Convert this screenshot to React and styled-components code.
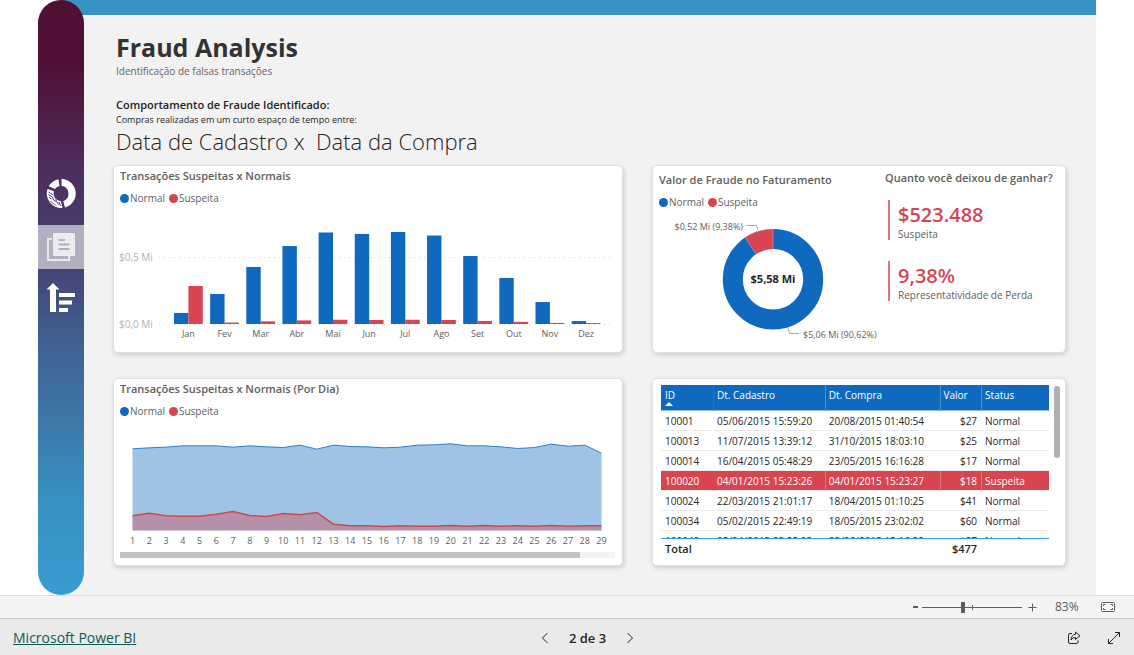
import React, { useState } from 'react';
import styled, { createGlobalStyle } from 'styled-components'

const BLUE = '#0f6abf'
const RED = '#d64550'

const GlobalStyle = createGlobalStyle`
    * { box-sizing: border-box; }
    body {
        margin: 0;
        background: #fff;
        color: #252423;
        font-family: "Open Sans", "Noto Sans", sans-serif;
        font-size: 11px;
    }
    h1, h2, p { margin: 0; }
    button, input { font: inherit; margin: 0; }
    svg { display: block; }
`

const Page = styled.div`
    min-height: 100vh;
    display: flex;
    flex-direction: column;
`

const Report = styled.div`
    flex: 1;
    display: flex;
    margin: 0 38px;
    background:
        linear-gradient(#3893c4, #3893c4) 23px 0 / 100% 15px no-repeat,
        linear-gradient(#f2f2f2, #f2f2f2) 23px 0 / 100% 100% no-repeat;
`

const Nav = styled.nav`
    width: 46px;
    flex: none;
    padding-top: 173px;
    display: flex;
    flex-direction: column;
    gap: 8px;
    border-radius: 23px;
    background: linear-gradient(#501036 0%, #501036 11%, #4c2d5b 28%, #444776 46%, #3f6596 60%, #3890c2 84%, #379ccf 100%);
`

const NavButton = styled.button`
    width: 46px;
    height: 44px;
    padding: 0;
    border: 0;
    color: ${p => p.$active ? '#ececef' : '#fff'};
    background: ${p => p.$active ? '#b2b0c0' : 'transparent'};
`

const Content = styled.main`
    flex: 1;
    min-width: 0;
    padding: 33px 30px 29px 29px;
`

const Heading = styled.header`
    height: 132px;
    padding-left: 3px;
`

const Title = styled.h1`
    font-size: 25px;
    line-height: 28px;
    font-weight: 700;
    color: #333;
`

const SubTitle = styled.p`
    font-size: 10px;
    line-height: 20px;
    color: #666;
    margin-bottom: 15px;
`

const Lead = styled.p`
    font-size: 11px;
    line-height: 18px;
    font-weight: 600;
`

const Note = styled.p`
    font-size: 9px;
    line-height: 12px;
`

const Versus = styled.p`
    font-size: 22px;
    line-height: 30px;
    font-weight: 300;
    white-space: pre;
`

const Grid = styled.div`
    display: grid;
    grid-template-columns: 510fr 414fr;
    gap: 25px 29px;
`

const Card = styled.section`
    display: ${p => p.$row ? 'flex' : 'block'};
    min-width: 0;
    min-height: 188px;
    background: #fff;
    border: 1px solid #e0e0e0;
    border-radius: 5px;
    box-shadow: 1px 2px 5px rgba(0, 0, 0, 0.16);
`

const CardTitle = styled.h2`
    padding-left: ${p => p.$flush ? 0 : 6}px;
    font-size: 11px;
    line-height: 20px;
    font-weight: 600;
    color: #605e5c;
    white-space: nowrap;
`

const LegendRow = styled.div`
    display: flex;
    gap: 4px;
    margin-top: 4px;
    padding-left: 6px;
    font-size: 10px;
    line-height: 16px;
    color: #605e5c;
`

const LegendItem = styled.span`
    display: flex;
    align-items: center;
    gap: 1px;
    &::before {
        content: "";
        width: 9px;
        height: 9px;
        border-radius: 50%;
        background: ${p => p.$color};
    }
`

const Chart = styled.svg`
    width: 100%;
    height: auto;
    font-size: 9px;
    fill: #605e5c;
`

const ScrollTrack = styled.div`
    height: 6px;
    margin: 1px 7px 0 6px;
    background: #f3f3f3;
`

const ScrollThumb = styled.div`
    width: 93%;
    height: 6px;
    background: #c4c4c4;
`

const DonutPane = styled.div`
    flex: 232;
    padding-top: 4px;
`

const KpiPane = styled.div`
    flex: 180;
    padding-top: 2px;
`

const Kpi = styled.div`
    height: 40px;
    margin: ${p => p.$first ? 12 : 21}px 0 0 3px;
    padding-left: 8px;
    border-left: 2px solid #e0737b;
`

const KpiValue = styled.div`
    padding-top: 3px;
    font-size: 20px;
    line-height: 24px;
    font-weight: 600;
    color: ${RED};
`

const KpiLabel = styled.div`
    font-size: 10px;
    line-height: 14px;
    color: #605e5c;
    white-space: nowrap;
`

const TableArea = styled.div`
    display: flex;
    gap: 5px;
    padding: 6px 5px 6px 8px;
`

const TableView = styled.div`
    flex: 1;
    height: 174px;
    overflow: hidden;
`

const Table = styled.table`
    width: 100%;
    table-layout: fixed;
    border-collapse: separate;
    border-spacing: 0;
    font-size: 10px;
    line-height: 18px;
    th, td {
        padding: 0 4px;
        text-align: left;
        white-space: nowrap;
    }
    th + th, td + td { padding-left: 3px; }
    .num { text-align: right; }
`

const HeadCell = styled.th`
    height: 26px;
    vertical-align: top;
    line-height: 20px;
    font-weight: 400;
    color: #fff;
    background: ${BLUE};
    border-bottom: 1px solid #8cbbe4;
    & + & { border-left: 1px solid #1f74c4; }
    & + & + & { border-left-color: #4a92d2; }
`

const SortMark = styled.svg`
    margin-top: -3px;
`

const Row = styled.tr`
    color: ${p => p.$alert ? '#fff' : '#252423'};
    background: ${p => p.$alert ? RED : '#fff'};
    td {
        height: 20px;
        border-bottom: 1px solid #eaeaea;
    }
    td + td { border-left: 1px solid transparent; }
    td + td + td { border-left-color: ${p => p.$alert ? '#e0737b' : 'transparent'}; }
`

const TotalCell = styled.td`
    position: sticky;
    bottom: 0;
    height: 21px;
    font-size: 11px;
    font-weight: 600;
    background: #fff;
    border-top: 1px solid #3599ee;
`

const TableScroll = styled.div`
    width: 6px;
    height: 72px;
    margin-top: 1px;
    border-radius: 3px;
    background: #b0b0b0;
`

const ZoomBar = styled.div`
    height: 23px;
    display: flex;
    align-items: center;
    justify-content: flex-end;
    padding-right: 18px;
    background: #f4f4f4;
    border-top: 1px solid #dedede;
    color: #605e5c;
`

const IconButton = styled.button`
    display: flex;
    align-items: center;
    justify-content: center;
    width: ${p => p.$w || 20}px;
    height: 20px;
    padding: 0;
    border: 0;
    background: none;
    color: inherit;
`

const ZoomRange = styled.input`
    appearance: none;
    width: 100px;
    height: 12px;
    background:
        linear-gradient(#605e5c, #605e5c) 0 6px / 100% 1px no-repeat,
        linear-gradient(#605e5c, #605e5c) 50px 4px / 1px 5px no-repeat;
    &::-webkit-slider-thumb {
        appearance: none;
        width: 4px;
        height: 11px;
        background: #605e5c;
    }
`

const ZoomValue = styled.span`
    width: 46px;
    padding-left: 13px;
    font-size: 12px;
    line-height: 18px;
    margin-right: 12px;
`

const Footer = styled.footer`
    height: 37px;
    display: grid;
    grid-template-columns: 1fr auto 1fr;
    align-items: center;
    padding: 2px 10px 0 13px;
    background: #eaeaea;
    border-top: 1px solid #c8c6c4;
`

const Brand = styled.a`
    font-size: 14px;
    line-height: 20px;
    color: #0f5a57;
`

const Pager = styled.div`
    display: flex;
    align-items: center;
    gap: 14px;
    padding-left: 38px;
    font-size: 13px;
    font-weight: 600;
`

const Actions = styled.div`
    display: flex;
    justify-content: flex-end;
    gap: 20px;
`

// values in thousands of dollars
const months = [
    ['Jan', 83, 286], ['Fev', 226, 11], ['Mar', 429, 20], ['Abr', 586, 27],
    ['Mai', 688, 32], ['Jun', 677, 30], ['Jul', 692, 32], ['Ago', 665, 30],
    ['Set', 511, 23], ['Out', 346, 16], ['Nov', 165, 8], ['Dez', 22, 7],
]

const normalByDay = [245, 248, 250, 254, 254, 254, 250, 254, 251, 249, 256, 244, 256, 252, 251, 248, 250, 256, 257, 260, 254, 254, 251, 246, 249, 259, 253, 256, 232]
const suspectByDay = [44, 52, 44, 43, 43, 49, 57, 45, 42, 51, 47, 54, 19, 14, 14, 12, 14, 13, 13, 15, 13, 15, 13, 14, 13, 15, 13, 14, 14]

const rows = [
    ['10001', '05/06/2015 15:59:20', '20/08/2015 01:40:54', '$27', 'Normal'],
    ['100013', '11/07/2015 13:39:12', '31/10/2015 18:03:10', '$25', 'Normal'],
    ['100014', '16/04/2015 05:48:29', '23/05/2015 16:16:28', '$17', 'Normal'],
    ['100020', '04/01/2015 15:23:26', '04/01/2015 15:23:27', '$18', 'Suspeita'],
    ['100024', '22/03/2015 21:01:17', '18/04/2015 01:10:25', '$41', 'Normal'],
    ['100034', '05/02/2015 22:49:19', '18/05/2015 23:02:02', '$60', 'Normal'],
    ['100040', '05/04/2015 23:25:03', '23/06/2015 15:16:38', '$37', 'Normal'],
]

const Legend = () => (
    <LegendRow>
        <LegendItem $color={BLUE}>Normal</LegendItem>
        <LegendItem $color={RED}>Suspeita</LegendItem>
    </LegendRow>
)

const BarChart = () => {
    const base = 118
    const k = 0.133
    return (
        <Chart viewBox="0 0 508 146">
            {[['$0,5 Mi', 51.5], ['$0,0 Mi', 118.5]].map(([label, y]) => (
                <g key={label}>
                    <text x="5" y={y + 3} fill="#b3b0ad" fontSize="10">{label}</text>
                    <line x1="45" x2="498" y1={y} y2={y} stroke="#d6d6d6" strokeDasharray="1 4" />
                </g>
            ))}
            {months.map(([name, normal, suspect], i) => {
                const x = 60 + i * 36.15
                return (
                    <g key={name}>
                        <rect x={x} y={base - normal * k} width="14.4" height={normal * k} fill={BLUE} />
                        <rect x={x + 14.4} y={base - suspect * k} width="14.4" height={suspect * k} fill={RED} />
                        <text x={x + 14.4} y="131" textAnchor="middle">{name}</text>
                    </g>
                )
            })}
        </Chart>
    )
}

const AreaChart = () => {
    const px = i => 18.5 + i * 16.75
    const line = data => data.map((v, i) => `${px(i)},${111.5 - v / 3}`).join(' ')
    const area = data => `${px(0)},111.5 ${line(data)} ${px(28)},111.5`
    return (
        <Chart viewBox="0 0 508 132">
            <polygon points={area(normalByDay)} fill={BLUE} fillOpacity="0.4" />
            <polygon points={area(suspectByDay)} fill={RED} fillOpacity="0.4" />
            <polyline points={line(normalByDay)} fill="none" stroke="#2f7fcb" />
            <polyline points={line(suspectByDay)} fill="none" stroke={RED} strokeWidth="1.5" />
            {normalByDay.map((v, i) => (
                <text key={i} x={px(i)} y="125" textAnchor="middle">{i + 1}</text>
            ))}
        </Chart>
    )
}

const Donut = () => (
    <Chart viewBox="0 0 232 142">
        <circle cx="120" cy="69.3" r="40.2" fill="none" stroke={BLUE} strokeWidth="20" />
        <path d="M92 27.6A50.2 50.2 0 0 1 120 19.1V39.1A30.2 30.2 0 0 0 103.2 44.2Z" fill={RED} stroke="#fff" strokeWidth="0.3" />
        <path d="M93.5 15.5H103.5L105 20M135 118l1.500 5.500H146" fill="none" stroke="#a6a6a6" />
        <text x="90" y="20" textAnchor="end">$0,52 Mi (9,38%)</text>
        <text x="150" y="128">$5,06 Mi (90,62%)</text>
        <text x="120" y="73" textAnchor="middle" fontSize="11" fontWeight="700" fill="#252423">$5,58 Mi</text>
    </Chart>
)

const DonutIcon = () => (
    <svg width="46" height="44" viewBox="0 0 46 44" fill="currentColor">
        <path d="M23.500 6A14.500 14.500 0 0 1 27 34.500L25.300 28.200A8 8 0 0 0 23.500 12.800Z" />
        <path d="M20.500 6.300L21.500 13A8 8 0 0 0 17 16L10.800 13.300A14.500 14.500 0 0 1 20.500 6.300Z" />
        <path d="M9.500 16L15.800 18.200A8 8 0 0 0 22.800 28.300L24.500 35A14.500 14.500 0 0 1 9.500 16Z" />
        <path d="M10.500 19l4 2.500M10.300 21.500l5 3.200M11 24.500l2.500 1.600M14.500 25l3 4M12.500 28l3 3M17.500 26.500l3 5M16 30.500l2 2M21 29l1.500 4" stroke="#493b69" fill="none" />
    </svg>
)

const PagesIcon = () => (
    <svg width="46" height="44" viewBox="0 0 46 44">
        <path d="M14 13.800H10V35H31.200V31" fill="none" stroke="currentColor" strokeWidth="1.800" />
        <rect x="15" y="8" width="22" height="23" rx="1" fill="currentColor" />
        <path d="M20.500 15H27M20.500 19.500H31.500M20.500 24H31.500" stroke="#b2b0c0" strokeWidth="1.800" />
    </svg>
)

const SortIcon = () => (
    <svg width="46" height="44" viewBox="0 0 46 44" fill="currentColor">
        <path d="M15 6l6.500 6.500H18V35h-6V12.500H8.500ZM21 16h16v4H21ZM21 23.500h13v4H21ZM21 31h9v4h-9Z" />
    </svg>
)

const Chevron = ({ d }) => (
    <svg width="12" height="14" viewBox="0 0 12 14" fill="none" stroke="#252423">
        <path d={d} />
    </svg>
)

const DataTable = () => (
    <TableArea>
        <TableView>
            <Table>
                <colgroup>
                    <col style={{ width: '13.400%' }} />
                    <col style={{ width: '28.800%' }} />
                    <col style={{ width: '29.600%' }} />
                    <col style={{ width: '10.700%' }} />
                    <col />
                </colgroup>
                <thead>
                    <tr>
                        <HeadCell>
                            ID
                            <SortMark width="8" height="4" viewBox="0 0 8 4"><path d="M0 4L4 0L8 4Z" fill="#fff" /></SortMark>
                        </HeadCell>
                        <HeadCell>Dt. Cadastro</HeadCell>
                        <HeadCell>Dt. Compra</HeadCell>
                        <HeadCell>Valor</HeadCell>
                        <HeadCell>Status</HeadCell>
                    </tr>
                </thead>
                <tbody>
                    {rows.map(r => (
                        <Row key={r[0]} $alert={r[4] === 'Suspeita'}>
                            {r.map((c, i) => <td key={i} className={i === 3 ? 'num' : undefined}>{c}</td>)}
                        </Row>
                    ))}
                </tbody>
                <tfoot>
                    <tr>
                        <TotalCell colSpan="3">Total</TotalCell>
                        <TotalCell className="num">$477</TotalCell>
                        <TotalCell />
                    </tr>
                </tfoot>
            </Table>
        </TableView>
        <TableScroll />
    </TableArea>
)

const App = () => {
    const [zoom, setZoom] = useState(41)
    return (
        <Page>
            <GlobalStyle />
            <Report>
                <Nav>
                    <NavButton aria-label="Visão geral"><DonutIcon /></NavButton>
                    <NavButton $active aria-label="Fraudes"><PagesIcon /></NavButton>
                    <NavButton aria-label="Ranking"><SortIcon /></NavButton>
                </Nav>
                <Content>
                    <Heading>
                        <Title>Fraud Analysis</Title>
                        <SubTitle>Identificação de falsas transações</SubTitle>
                        <Lead>Comportamento de Fraude Identificado:</Lead>
                        <Note>Compras realizadas em um curto espaço de tempo entre:</Note>
                        <Versus>{'Data de Cadastro x  Data da Compra'}</Versus>
                    </Heading>
                    <Grid>
                        <Card>
                            <CardTitle>Transações Suspeitas x Normais</CardTitle>
                            <Legend />
                            <BarChart />
                        </Card>
                        <Card $row>
                            <DonutPane>
                                <CardTitle>Valor de Fraude no Faturamento</CardTitle>
                                <Legend />
                                <Donut />
                            </DonutPane>
                            <KpiPane>
                                <CardTitle $flush>Quanto você deixou de ganhar?</CardTitle>
                                <Kpi $first>
                                    <KpiValue>$523.488</KpiValue>
                                    <KpiLabel>Suspeita</KpiLabel>
                                </Kpi>
                                <Kpi>
                                    <KpiValue>9,38%</KpiValue>
                                    <KpiLabel>Representatividade de Perda</KpiLabel>
                                </Kpi>
                            </KpiPane>
                        </Card>
                        <Card>
                            <CardTitle>Transações Suspeitas x Normais (Por Dia)</CardTitle>
                            <Legend />
                            <AreaChart />
                            <ScrollTrack><ScrollThumb /></ScrollTrack>
                        </Card>
                        <Card>
                            <DataTable />
                        </Card>
                    </Grid>
                </Content>
            </Report>
            <ZoomBar>
                <IconButton $w={14} aria-label="Reduzir">
                    <svg width="5" height="2"><rect width="5" height="2" fill="currentColor" /></svg>
                </IconButton>
                <ZoomRange type="range" aria-label="Zoom" value={zoom} onChange={e => setZoom(e.target.value)} />
                <IconButton aria-label="Ampliar">
                    <svg width="9" height="9" stroke="currentColor"><path d="M4.500 0.500V8.500M0.500 4.500H8.500" /></svg>
                </IconButton>
                <ZoomValue>83%</ZoomValue>
                <IconButton $w={16} aria-label="Ajustar à página">
                    <svg width="14" height="10" viewBox="0 0 14 10" fill="none" stroke="currentColor">
                        <rect x="0.500" y="0.500" width="13" height="9" rx="1" />
                        <path d="M2.500 4V2.500H4.500M9.500 2.500H11.500V4M11.500 6V7.500H9.500M4.500 7.500H2.500V6" />
                    </svg>
                </IconButton>
            </ZoomBar>
            <Footer>
                <div><Brand href="#">Microsoft Power BI</Brand></div>
                <Pager>
                    <IconButton aria-label="Página anterior"><Chevron d="M8.500 2L3.500 7L8.500 12" /></IconButton>
                    <span>2 de 3</span>
                    <IconButton aria-label="Próxima página"><Chevron d="M3.500 2L8.500 7L3.500 12" /></IconButton>
                </Pager>
                <Actions>
                    <IconButton aria-label="Compartilhar">
                        <svg width="14" height="14" viewBox="0 0 14 14" fill="none" stroke="#252423">
                            <path d="M5 2.500H3Q1.500 2.500 1.500 4V11Q1.500 12.500 3 12.500H9.500Q11 12.500 11 11V9.500" />
                            <path d="M8.500 1L13 4.800L8.500 8.500V6.500Q5.500 6.300 4 9Q4.300 3.800 8.500 3.200Z" />
                        </svg>
                    </IconButton>
                    <IconButton aria-label="Tela inteira">
                        <svg width="14" height="14" viewBox="0 0 14 14" fill="none" stroke="#252423">
                            <path d="M8 1.500H12.500V6M12.500 1.500L1.500 12.500M1.500 8V12.500H6" />
                        </svg>
                    </IconButton>
                </Actions>
            </Footer>
        </Page>
    )
}

export default App
